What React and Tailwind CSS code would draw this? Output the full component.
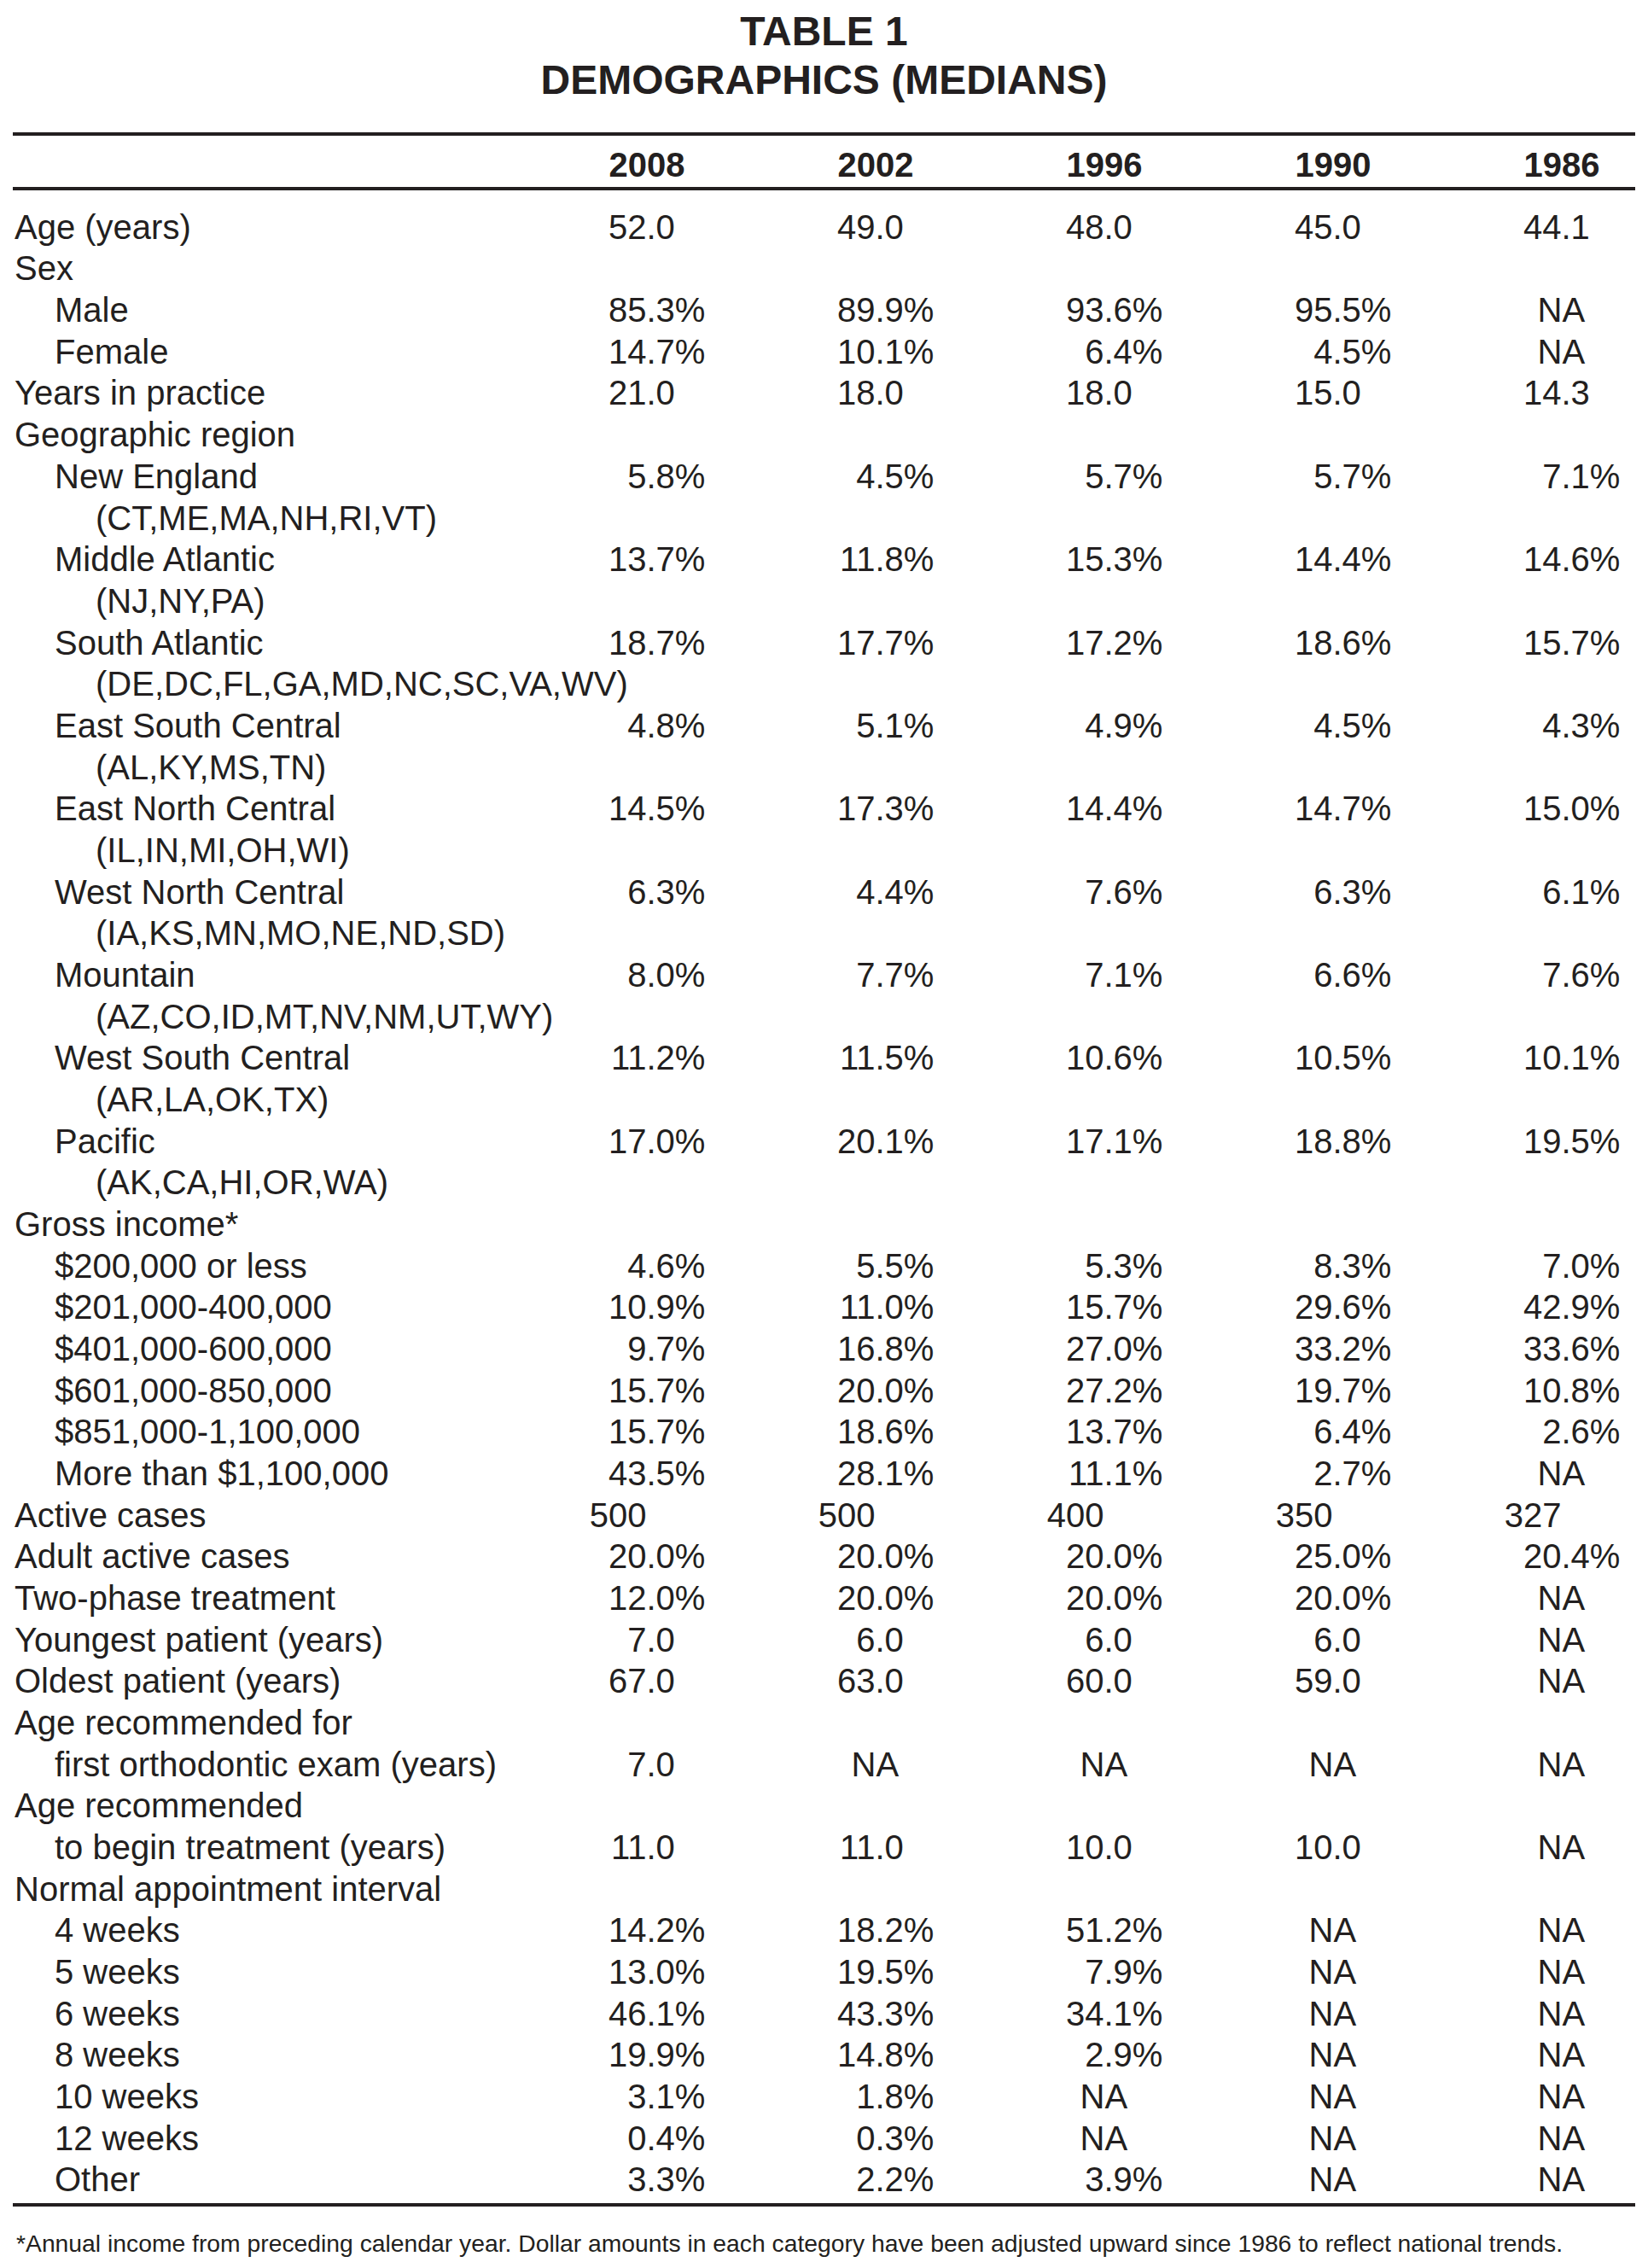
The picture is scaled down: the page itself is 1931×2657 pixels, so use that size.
import React from "react";

const rows = [
  ["Age (years)", 0, ["52.0", "49.0", "48.0", "45.0", "44.1"]],
  ["Sex", 0, null],
  ["Male", 1, ["85.3%", "89.9%", "93.6%", "95.5%", "NA"]],
  ["Female", 1, ["14.7%", "10.1%", "6.4%", "4.5%", "NA"]],
  ["Years in practice", 0, ["21.0", "18.0", "18.0", "15.0", "14.3"]],
  ["Geographic region", 0, null],
  ["New England", 1, ["5.8%", "4.5%", "5.7%", "5.7%", "7.1%"]],
  ["(CT,ME,MA,NH,RI,VT)", 2, null],
  ["Middle Atlantic", 1, ["13.7%", "11.8%", "15.3%", "14.4%", "14.6%"]],
  ["(NJ,NY,PA)", 2, null],
  ["South Atlantic", 1, ["18.7%", "17.7%", "17.2%", "18.6%", "15.7%"]],
  ["(DE,DC,FL,GA,MD,NC,SC,VA,WV)", 2, null],
  ["East South Central", 1, ["4.8%", "5.1%", "4.9%", "4.5%", "4.3%"]],
  ["(AL,KY,MS,TN)", 2, null],
  ["East North Central", 1, ["14.5%", "17.3%", "14.4%", "14.7%", "15.0%"]],
  ["(IL,IN,MI,OH,WI)", 2, null],
  ["West North Central", 1, ["6.3%", "4.4%", "7.6%", "6.3%", "6.1%"]],
  ["(IA,KS,MN,MO,NE,ND,SD)", 2, null],
  ["Mountain", 1, ["8.0%", "7.7%", "7.1%", "6.6%", "7.6%"]],
  ["(AZ,CO,ID,MT,NV,NM,UT,WY)", 2, null],
  ["West South Central", 1, ["11.2%", "11.5%", "10.6%", "10.5%", "10.1%"]],
  ["(AR,LA,OK,TX)", 2, null],
  ["Pacific", 1, ["17.0%", "20.1%", "17.1%", "18.8%", "19.5%"]],
  ["(AK,CA,HI,OR,WA)", 2, null],
  ["Gross income*", 0, null],
  ["$200,000 or less", 1, ["4.6%", "5.5%", "5.3%", "8.3%", "7.0%"]],
  ["$201,000-400,000", 1, ["10.9%", "11.0%", "15.7%", "29.6%", "42.9%"]],
  ["$401,000-600,000", 1, ["9.7%", "16.8%", "27.0%", "33.2%", "33.6%"]],
  ["$601,000-850,000", 1, ["15.7%", "20.0%", "27.2%", "19.7%", "10.8%"]],
  ["$851,000-1,100,000", 1, ["15.7%", "18.6%", "13.7%", "6.4%", "2.6%"]],
  ["More than $1,100,000", 1, ["43.5%", "28.1%", "11.1%", "2.7%", "NA"]],
  ["Active cases", 0, ["500", "500", "400", "350", "327"]],
  ["Adult active cases", 0, ["20.0%", "20.0%", "20.0%", "25.0%", "20.4%"]],
  ["Two-phase treatment", 0, ["12.0%", "20.0%", "20.0%", "20.0%", "NA"]],
  ["Youngest patient (years)", 0, ["7.0", "6.0", "6.0", "6.0", "NA"]],
  ["Oldest patient (years)", 0, ["67.0", "63.0", "60.0", "59.0", "NA"]],
  ["Age recommended for", 0, null],
  ["first orthodontic exam (years)", 1, ["7.0", "NA", "NA", "NA", "NA"]],
  ["Age recommended", 0, null],
  ["to begin treatment (years)", 1, ["11.0", "11.0", "10.0", "10.0", "NA"]],
  ["Normal appointment interval", 0, null],
  ["4 weeks", 1, ["14.2%", "18.2%", "51.2%", "NA", "NA"]],
  ["5 weeks", 1, ["13.0%", "19.5%", "7.9%", "NA", "NA"]],
  ["6 weeks", 1, ["46.1%", "43.3%", "34.1%", "NA", "NA"]],
  ["8 weeks", 1, ["19.9%", "14.8%", "2.9%", "NA", "NA"]],
  ["10 weeks", 1, ["3.1%", "1.8%", "NA", "NA", "NA"]],
  ["12 weeks", 1, ["0.4%", "0.3%", "NA", "NA", "NA"]],
  ["Other", 1, ["3.3%", "2.2%", "3.9%", "NA", "NA"]],
];

const indentClass = ["pl-[17px]", "pl-[64px]", "pl-[112px]"];

function Cell({ v }) {
  if (!v) return <div className="w-[268px] shrink-0" />;
  if (v === "NA")
    return <div className="w-[268px] shrink-0 pl-[152px]">NA</div>;
  const i = v.indexOf(".");
  const intPart = i >= 0 ? v.slice(0, i) : v;
  const rest = i >= 0 ? v.slice(i) : "";
  return (
    <div className="w-[268px] shrink-0 flex">
      <span className="w-[180px] shrink-0 text-right">{intPart}</span>
      <span>{rest}</span>
    </div>
  );
}

export default function App() {
  const years = ["2008", "2002", "1996", "1990", "1986"];
  return (
    <div className="w-[1931px] h-[2657px] bg-white text-[#231f20] font-['Liberation_Sans',Arial,Helvetica,sans-serif]">
      <div className="pt-[8px] text-center font-bold text-[48px] leading-[57px]">
        <div>TABLE 1</div>
        <div>DEMOGRAPHICS (MEDIANS)</div>
      </div>
      <div className="mt-[33px] mx-[15px] h-[4px] bg-[#231f20]" />
      <div className="h-[60px] pt-[10px] flex text-[40px] leading-[48px] font-bold">
        <div className="w-[577.5px] shrink-0" />
        {years.map((y) => (
          <div key={y} className="w-[268px] shrink-0 pl-[136px]">
            {y}
          </div>
        ))}
      </div>
      <div className="mx-[15px] h-[4px] bg-[#231f20]" />
      <div className="pt-[18.8px] text-[40px] leading-[48.68px]">
        {rows.map(([label, ind, vals], idx) => (
          <div key={idx} className="flex h-[48.68px]">
            <div
              className={`w-[577.5px] shrink-0 whitespace-nowrap ${indentClass[ind]}`}
            >
              {label}
            </div>
            {vals
              ? vals.map((v, j) => <Cell key={j} v={v} />)
              : null}
          </div>
        ))}
      </div>
      <div className="mt-[3.3px] mx-[15px] h-[4px] bg-[#231f20]" />
      <div className="mt-[26px] pl-[19px] text-[28.3px] leading-[34px] whitespace-nowrap">
        *Annual income from preceding calendar year. Dollar amounts in each
        category have been adjusted upward since 1986 to reflect national
        trends.
      </div>
    </div>
  );
}
